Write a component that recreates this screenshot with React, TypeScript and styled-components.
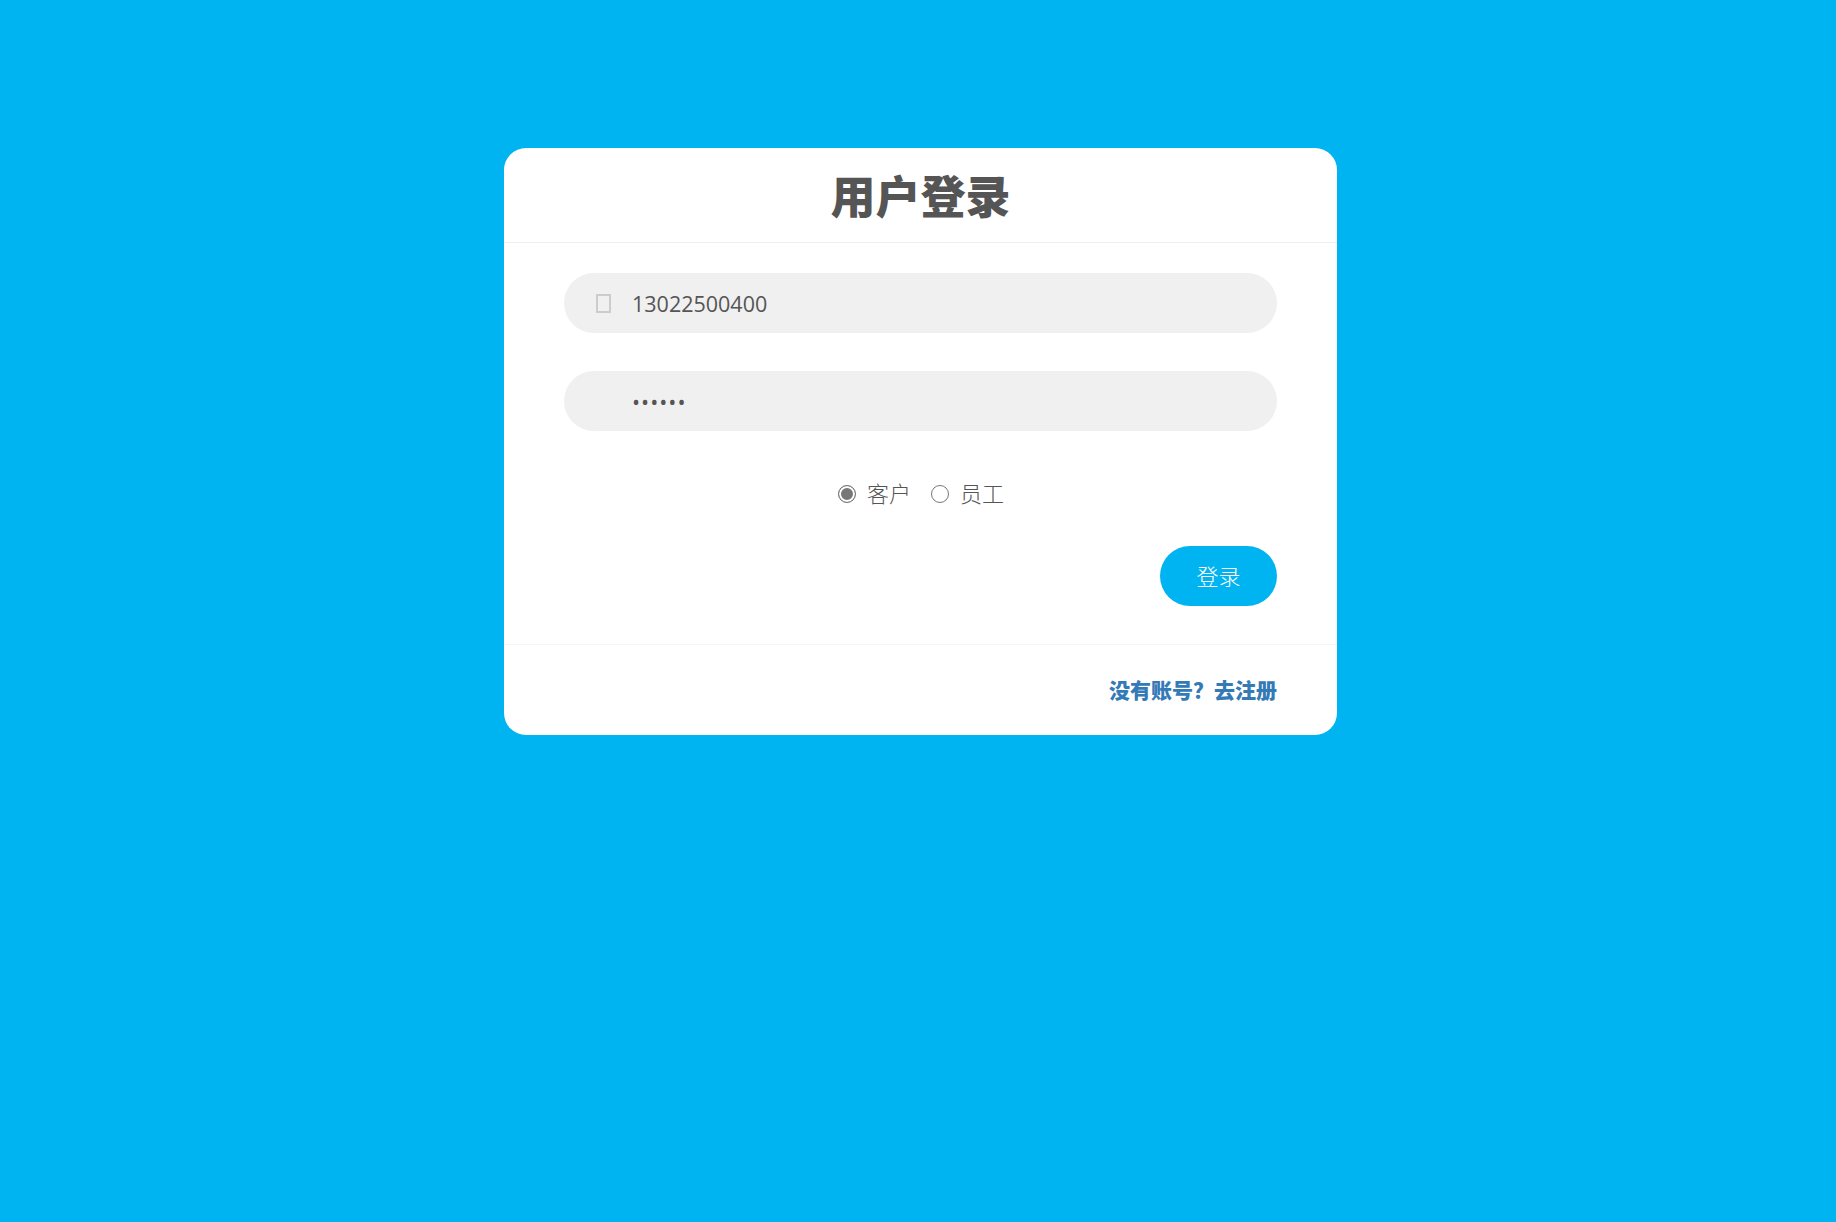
import React from 'react';
import styled, { createGlobalStyle } from 'styled-components';

const GlobalStyle = createGlobalStyle`
  html, body {
    margin: 0;
    padding: 0;
    background: #00b4f1;
  }
  * {
    box-sizing: border-box;
  }
`;

const FONT = `"Noto Sans CJK SC", "Open Sans", sans-serif`;

const Page = styled.div`
  min-height: 1222px;
  padding-top: 148px;
  background: #00b4f1;
  font-family: ${FONT};
  color: #555;
`;

const Card = styled.form`
  width: 833px;
  margin: 0 auto 0 504px;
  height: 587px;
  background: #fff;
  border-radius: 22px;
  overflow: hidden;
`;

const Header = styled.div`
  height: 95px;
  padding-bottom: 2px;
  border-bottom: 1px solid #eee;
  display: flex;
  align-items: center;
  justify-content: center;
`;

const Title = styled.h1`
  margin: 0;
  font-size: 45px;
  line-height: 1;
  font-weight: 900;
  color: #555;
`;

const Body = styled.div`
  height: 402px;
  padding: 30px 60px 0;
  border-bottom: 1px solid #f5f5f5;
`;

const Field = styled.div`
  height: 60px;
  margin-bottom: 38px;
  display: flex;
  align-items: center;
  padding-left: 32px;
  background: #f0f0f0;
  border-radius: 30px;
`;

const IconSlot = styled.span<{ $empty?: boolean }>`
  flex: 0 0 15px;
  height: 19px;
  margin-right: 21px;
  border: ${(p) => (p.$empty ? 'none' : '2px solid #ccc')};
`;

const TextInput = styled.input`
  flex: 1;
  min-width: 0;
  padding: 0;
  border: none;
  outline: none;
  background: transparent;
  font-family: "Open Sans", sans-serif;
  font-size: 21.5px;
  color: #555;

  &[type='password'] {
    letter-spacing: 1px;
  }
`;

const RadioRow = styled.div`
  display: flex;
  justify-content: center;
  align-items: center;
  height: 28px;
  margin-top: 47px;
  padding-left: 1px;
  gap: 20px;
`;

const RadioLabel = styled.label`
  display: flex;
  align-items: center;
  gap: 11px;
  font-size: 22px;
  font-weight: 300;
  color: #555;
`;

const Radio = styled.input`
  appearance: none;
  width: 18px;
  height: 18px;
  margin: 4px 0 0;
  border: 1.75px solid #777;
  border-radius: 50%;
  background: #fff;

  &:checked {
    background: #777;
    box-shadow: inset 0 0 0 2px #fff;
  }
`;

const Actions = styled.div`
  display: flex;
  justify-content: flex-end;
  margin-top: 40px;
`;

const SubmitButton = styled.button`
  width: 117px;
  height: 60px;
  padding: 0 0 2px;
  border: none;
  border-radius: 30px;
  background: #00b4f1;
  color: #fff;
  font-family: ${FONT};
  font-size: 22px;
  font-weight: 300;
`;

const Footer = styled.div`
  height: 90px;
  padding: 0 60px 2px 0;
  display: flex;
  align-items: center;
  justify-content: flex-end;
`;

const RegisterLink = styled.a`
  font-size: 21px;
  font-weight: 900;
  color: #337ab7;
  text-decoration: none;
`;

export default function App() {
  return (
    <Page>
      <GlobalStyle />
      <Card onSubmit={(e) => e.preventDefault()}>
        <Header>
          <Title>用户登录</Title>
        </Header>
        <Body>
          <Field>
            <IconSlot />
            <TextInput type="text" defaultValue="13022500400" />
          </Field>
          <Field>
            <IconSlot $empty />
            <TextInput type="password" defaultValue="123456" />
          </Field>
          <RadioRow>
            <RadioLabel>
              <Radio type="radio" name="role" defaultChecked />
              客户
            </RadioLabel>
            <RadioLabel>
              <Radio type="radio" name="role" />
              员工
            </RadioLabel>
          </RadioRow>
          <Actions>
            <SubmitButton type="submit">登录</SubmitButton>
          </Actions>
        </Body>
        <Footer>
          <RegisterLink href="#">没有账号？去注册</RegisterLink>
        </Footer>
      </Card>
    </Page>
  );
}
